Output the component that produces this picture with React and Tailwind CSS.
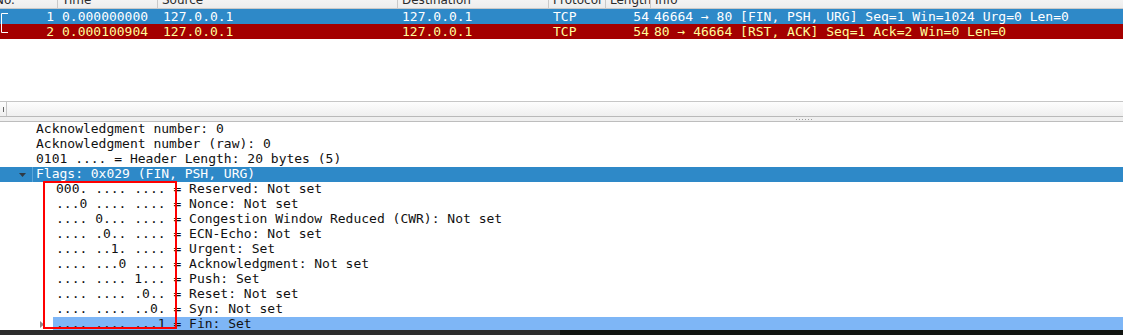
import React from "react";

const mono = { fontFamily: '"DejaVu Sans Mono", "Liberation Mono", monospace' };

const columns = [
  { key: "no", title: "No.", w: "w-[58px]", align: "text-right" },
  { key: "time", title: "Time", w: "w-[100px]" },
  { key: "src", title: "Source", w: "w-[240px]" },
  { key: "dst", title: "Destination", w: "w-[151px]" },
  { key: "proto", title: "Protocol", w: "w-[57px]" },
  { key: "len", title: "Length", w: "w-[45px]", align: "text-right" },
  { key: "info", title: "Info", w: "flex-1" },
];

const packets = [
  {
    no: "1",
    time: "0.000000000",
    src: "127.0.0.1",
    dst: "127.0.0.1",
    proto: "TCP",
    len: "54",
    info: "46664 → 80 [FIN, PSH, URG] Seq=1 Win=1024 Urg=0 Len=0",
    row: "bg-[#2e89c8] text-white",
  },
  {
    no: "2",
    time: "0.000100904",
    src: "127.0.0.1",
    dst: "127.0.0.1",
    proto: "TCP",
    len: "54",
    info: "80 → 46664 [RST, ACK] Seq=1 Ack=2 Win=0 Len=0",
    row: "bg-[#a40000] text-[#fffc9c]",
  },
];

const flagBits = [
  ["000. .... ....", "Reserved: Not set"],
  ["...0 .... ....", "Nonce: Not set"],
  [".... 0... ....", "Congestion Window Reduced (CWR): Not set"],
  [".... .0.. ....", "ECN-Echo: Not set"],
  [".... ..1. ....", "Urgent: Set"],
  [".... ...0 ....", "Acknowledgment: Not set"],
  [".... .... 1...", "Push: Set"],
  [".... .... .0..", "Reset: Not set"],
  [".... .... ..0.", "Syn: Not set"],
];

function PacketList() {
  return (
    <div>
      <div className="h-[9px] overflow-hidden border-b border-[#c9c9c9]">
        <div
          className="-mt-[8px] h-[17px] flex bg-gradient-to-b from-[#fafafa] to-[#ececec] text-[12px] leading-[17px] text-[#2b2b2b]"
          style={{ fontFamily: '"DejaVu Sans", sans-serif' }}
        >
          {columns.map((c, i) => (
            <div
              key={c.key}
              className={`${c.w} shrink-0 overflow-hidden whitespace-nowrap pl-[4px] ${
                i < columns.length - 1 ? "border-r border-[#c9c9c9]" : ""
              } ${i === 0 ? "indent-[-9px]" : ""}`}
            >
              {c.title}
            </div>
          ))}
        </div>
      </div>
      {packets.map((p, r) => (
        <div key={p.no} className={`relative flex h-[15px] text-[13px] leading-[15px] ${p.row}`} style={mono}>
          {r === 0 && (
            <svg className="absolute left-0 top-[4px] z-10" width="10" height="21" viewBox="0 0 10 21">
              <path d="M8 0.5 H1.5 V19.5 H8" fill="none" stroke="#ffffff" strokeWidth="1" />
            </svg>
          )}
          {columns.map((c) => (
            <div
              key={c.key}
              className={`${c.w} shrink-0 overflow-hidden whitespace-nowrap px-[4px] ${c.align || ""} ${
                c.key === "src" ? "pl-[5px]" : ""
              } ${c.key === "len" ? "pr-[2px]" : ""} ${c.key === "info" ? "pl-[3px]" : ""}`}
            >
              {p[c.key]}
            </div>
          ))}
        </div>
      ))}
    </div>
  );
}

function Splitter() {
  return (
    <div>
      <div className="h-px bg-[#c6c6c6]" />
      <div className="flex h-[14px] bg-gradient-to-b from-[#fdfdfd] to-[#efefef]">
        <div className="w-[7px] border-r border-[#c6c6c6] flex items-center justify-center">
          <div className="w-px h-[5px] bg-[#666]" />
        </div>
      </div>
      <div className="h-px bg-[#b9b9b9]" />
      <div className="flex h-[4px] items-center bg-[#efefef] pl-[796px] gap-[2px]">
        {[0, 1, 2, 3, 4, 5].map((i) => (
          <div key={i} className="w-px h-px bg-[#9c9c9c]" />
        ))}
      </div>
      <div className="h-px bg-[#bdbdbd]" />
    </div>
  );
}

function Tree() {
  return (
    <div className="relative h-[208px] overflow-hidden bg-white text-[13px] leading-[13px] text-[#111]" style={mono}>
      <div className="h-[15px] pl-[36px] whitespace-nowrap">Acknowledgment number: 0</div>
      <div className="h-[15px] pl-[36px] whitespace-nowrap">Acknowledgment number (raw): 0</div>
      <div className="h-[15px] pl-[36px] whitespace-nowrap">0101 .... = Header Length: 20 bytes (5)</div>
      <div className="relative flex h-[15px] items-start bg-[#2e89c8] text-white whitespace-nowrap">
        <svg className="ml-[19px] mr-[6px] mt-[6px]" width="7" height="4" viewBox="0 0 7 4">
          <path d="M0 0 H7 L3.5 4 Z" fill="#2f3a44" />
        </svg>
        <span className="h-[15px] pl-[3px] pr-[2px] border-l border-[#5aa6da]">Flags: 0x029 (FIN, PSH, URG)</span>
      </div>
      {flagBits.map(([bits, label]) => (
        <div key={label} className="h-[15px] pl-[56px] whitespace-nowrap">
          {bits} = {label}
        </div>
      ))}
      <div className="flex h-[15px] items-start whitespace-nowrap">
        <svg className="ml-[40px] mr-[9px] mt-[4px]" width="4" height="7" viewBox="0 0 4 7">
          <path d="M0 0 L4 3.5 L0 7 Z" fill="#8a8a8a" />
        </svg>
        <div className="flex-1 h-[15px] bg-[#7eb6f6] pl-[3px]">.... .... ...1 = Fin: Set</div>
      </div>
      <div className="absolute left-[43px] top-[59px] w-[134px] h-[148px] border-2 border-[#ff0000] pointer-events-none" />
    </div>
  );
}

export default function App() {
  return (
    <div className="w-[1123px] h-[335px] overflow-hidden flex flex-col bg-white">
      <PacketList />
      <div className="h-[62px] bg-white" />
      <Splitter />
      <Tree />
      <div className="flex h-[5px]">
        <div className="w-[560px] bg-[#2d2d2d]" />
        <div className="flex-1 bg-[#111411]" />
      </div>
    </div>
  );
}
